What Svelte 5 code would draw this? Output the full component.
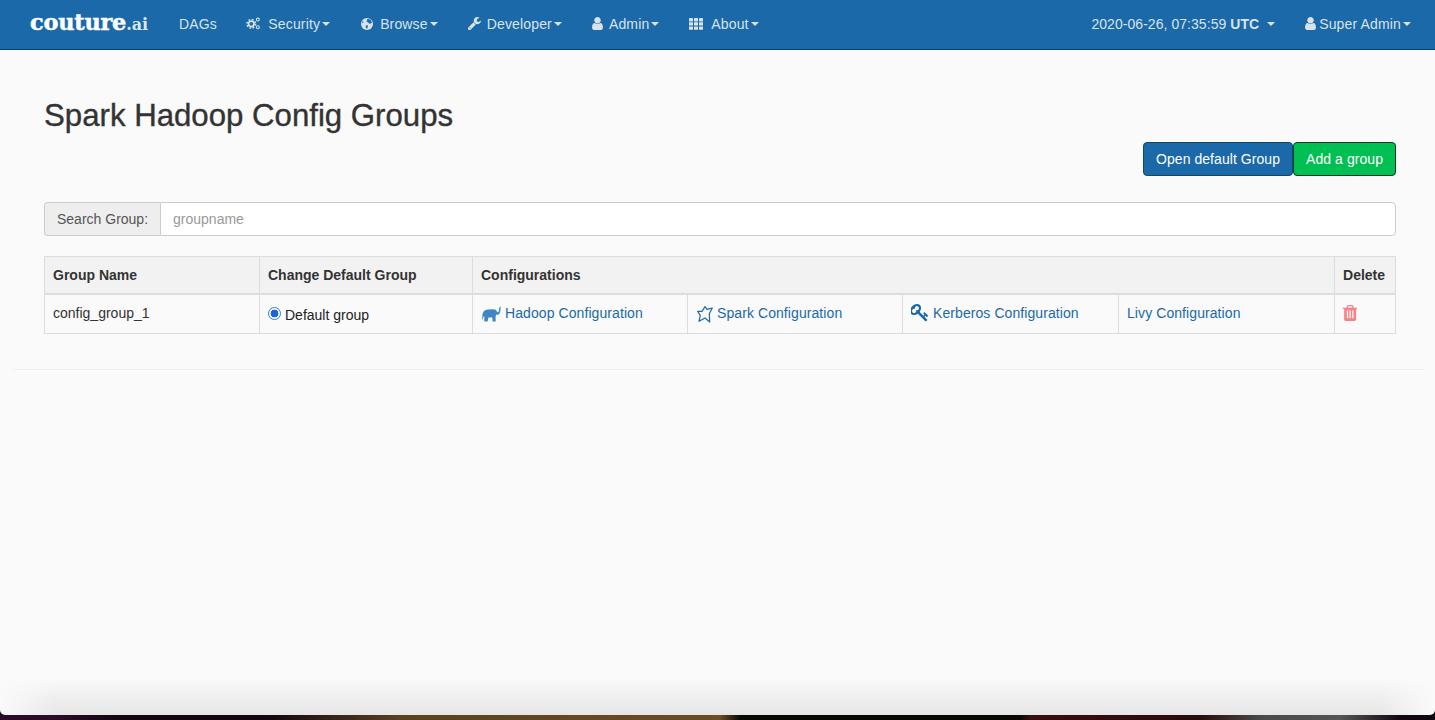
<script lang="ts">
  const userPath =
    'M1536 1399q0 109-62.5 187t-150.5 78h-854q-88 0-150.5-78t-62.5-187q0-85 8.5-160.5t31.5-152 58.5-131 94-89 134.5-34.5q131 128 313 128t313-128q76 0 134.5 34.5t94 89 58.5 131 31.5 152 8.5 160.5zm-256-887q0 159-112.5 271.5t-271.5 112.5-271.5-112.5-112.5-271.5 112.5-271.5 271.5-112.5 271.5 112.5 112.5 271.5z';
  const wrenchPath =
    'M448 1472q0-26-19-45t-45-19-45 19-19 45 19 45 45 19 45-19 19-45zm644-420l-682 682q-37 37-90 37-52 0-91-37l-106-108q-38-36-38-90 0-53 38-91l681-681q39 98 114.5 173.5t173.5 114.5zm634-435q0 39-23 106-47 134-164.5 217.5t-258.5 83.5q-185 0-316.5-131.5t-131.5-316.5 131.5-316.5 316.5-131.5q58 0 121.5 16.5t107.5 46.5q16 11 16 28t-16 28l-293 169v224l193 107q5-3 79-48.5t135.5-81 70.5-35.5q15 0 23.5 10t8.5 25z';
  const keyPath =
    'M832 512q0-80-56-136t-136-56-136 56-56 136q0 42 19 83-41-19-83-19-80 0-136 56t-56 136 56 136 136 56 136-56 56-136q0-42-19-83 41 19 83 19 80 0 136-56t56-136zm851 704q0 17-49 66t-66 49q-9 0-28.5-16t-36.5-33-38.5-40-24.5-26l-96 96 220 220q28 28 28 68 0 42-39 81t-81 39q-40 0-68-28l-671-671q-176 131-365 131-163 0-265.5-102.5t-102.5-265.5q0-160 95-313t248-248 313-95q163 0 265.5 102.5t102.5 265.5q0 189-131 365l355 355 96-96q-2-2-26-24.5t-40-38.5-33-36.5-16-28.5q0-17 49-66t66-49q13 0 23 10 6 6 46 44.5t82 79.5 86.5 86 73 78 28.5 41z';
  const trashPath =
    'M704 1376v-704q0-14-9-23t-23-9h-64q-14 0-23 9t-9 23v704q0 14 9 23t23 9h64q14 0 23-9t9-23zm256 0v-704q0-14-9-23t-23-9h-64q-14 0-23 9t-9 23v704q0 14 9 23t23 9h64q14 0 23-9t9-23zm256 0v-704q0-14-9-23t-23-9h-64q-14 0-23 9t-9 23v704q0 14 9 23t23 9h64q14 0 23-9t9-23zm-544-992h448l-48-117q-7-9-17-11h-317q-10 2-17 11zm928 32v64q0 14-9 23t-23 9h-96v948q0 83-47 143.5t-113 60.5h-832q-66 0-113-58.5t-47-141.5v-952h-96q-14 0-23-9t-9-23v-64q0-14 9-23t23-9h309l70-167q15-37 54-63t79-26h320q40 0 79 26t54 63l70 167h309q14 0 23 9t9 23z';
</script>

<div class="page">
  <nav class="navbar">
    <a class="brand" href="#home">couture<span class="brand-ai">.ai</span></a>
    <ul class="menu">
      <li><a class="plain" href="#dags">DAGs</a></li>
      <li>
        <a href="#security">
          <svg class="ico cogs" viewBox="0 0 16 14" aria-hidden="true">
            <circle cx="5.6" cy="7.4" r="3" fill="none" stroke="currentColor" stroke-width="1.9" />
            <circle cx="5.6" cy="7.4" r="4.7" fill="none" stroke="currentColor" stroke-width="1.5" stroke-dasharray="1.9 1.8" />
            <circle cx="12.7" cy="2.8" r="1.6" fill="none" stroke="currentColor" stroke-width="1.1" />
            <circle cx="12.7" cy="11" r="1.6" fill="none" stroke="currentColor" stroke-width="1.1" />
          </svg>
          <span>Security</span><i class="caret"></i>
        </a>
      </li>
      <li>
        <a href="#browse">
          <svg class="ico globe" viewBox="0 0 12 12" aria-hidden="true">
            <circle cx="6" cy="6" r="6" fill="currentColor" />
            <path d="M6.5 0.8 9.5 1.8 11 4.5 8.8 6 7.2 4.6 5.5 3.6ZM4.8 7.2 7 7.6 6.2 11 4.8 9.6ZM0.6 3.8 2.4 3.2 2 5.2Z" fill="#1b69a8" />
          </svg>
          <span>Browse</span><i class="caret"></i>
        </a>
      </li>
      <li>
        <a href="#developer">
          <svg class="ico wrench" viewBox="128 128 1600 1600" aria-hidden="true"><path d={wrenchPath} fill="currentColor" /></svg>
          <span>Developer</span><i class="caret"></i>
        </a>
      </li>
      <li>
        <a href="#admin">
          <svg class="ico user" viewBox="256 128 1280 1536" aria-hidden="true"><path d={userPath} fill="currentColor" /></svg>
          <span>Admin</span><i class="caret"></i>
        </a>
      </li>
      <li>
        <a href="#about">
          <svg class="ico grid" viewBox="0 0 14 12" aria-hidden="true">
            {#each [0, 4.2, 8.4] as y}
              {#each [0, 5, 10] as x}
                <rect {x} {y} width="4" height="3.4" rx="0.4" fill="currentColor" />
              {/each}
            {/each}
          </svg>
          <span>About</span><i class="caret"></i>
        </a>
      </li>
    </ul>
    <ul class="menu menu-right">
      <li>
        <a href="#clock"><span class="clock">2020-06-26, 07:35:59 <b>UTC</b></span><i class="caret caret-clock"></i></a>
      </li>
      <li>
        <a href="#profile">
          <svg class="ico user user-small" viewBox="256 128 1280 1536" aria-hidden="true"><path d={userPath} fill="currentColor" /></svg>
          <span>Super Admin</span><i class="caret"></i>
        </a>
      </li>
    </ul>
  </nav>

  <main class="content">
    <div class="container">
      <h1>Spark Hadoop Config Groups</h1>
      <div class="actions">
        <button type="button" class="btn btn-blue">Open default Group</button>
        <button type="button" class="btn btn-green">Add a group</button>
      </div>

      <div class="search">
        <span class="search-label">Search Group:</span>
        <input class="search-input" type="text" placeholder="groupname" />
      </div>

      <table class="groups">
        <colgroup>
          <col style="width: 215px" />
          <col style="width: 213px" />
          <col style="width: 215px" />
          <col style="width: 215px" />
          <col style="width: 216px" />
          <col style="width: 216px" />
          <col style="width: 61px" />
        </colgroup>
        <thead>
          <tr>
            <th>Group Name</th>
            <th>Change Default Group</th>
            <th colspan="4">Configurations</th>
            <th>Delete</th>
          </tr>
        </thead>
        <tbody>
          <tr>
            <td>config_group_1</td>
            <td>
              <span class="radio-row"><span class="radio"></span>Default group</span>
            </td>
            <td>
              <a href="#hadoop">
                <svg class="cfg-ico elephant" viewBox="0 0 20 16" aria-hidden="true">
                  <path d="M0.4 9.5C0.6 6 2.6 3.6 6 3.5L11 3.3C13 3.2 14.4 4 14.8 5.6C15.6 6.8 16.8 6.2 17 4.6L17.3 1.6 18.9 0.3 18.4 2 18.7 2.4 18.2 5.4C17.8 8 15.8 9.4 14.3 8.6L13.6 10.2 13.7 15.6 10.6 15.6 10.3 11.6 6.4 11.6 5.6 15.6 2.2 15.6 2.4 10.4 1.4 10.6 0.9 13.4 0.2 13.2Z" fill="#3f86c4" />
                </svg><span>Hadoop Configuration</span>
              </a>
            </td>
            <td>
              <a href="#spark">
                <svg class="cfg-ico spark" viewBox="0 0 16 17" aria-hidden="true">
                  <path d="M0.7 5.3 5 5.3 8 0.7 10 3.3 15.3 2 12.3 7.7 12.7 16 8 12 2 15.3 3.3 9.3Z" fill="none" stroke="#1b69a8" stroke-width="1.2" stroke-linejoin="round" />
                </svg><span>Spark Configuration</span>
              </a>
            </td>
            <td>
              <a href="#kerberos">
                <svg class="cfg-ico key" viewBox="128 128 1600 1664" aria-hidden="true"><path d={keyPath} fill="#1b69a8" /></svg><span>Kerberos Configuration</span>
              </a>
            </td>
            <td><a href="#livy"><span>Livy Configuration</span></a></td>
            <td>
              <a href="#delete" aria-label="Delete">
                <svg class="trash" viewBox="128 128 1408 1536" aria-hidden="true"><path d={trashPath} fill="#fb7f83" /></svg>
              </a>
            </td>
          </tr>
        </tbody>
      </table>
    </div>
    <hr class="rule" />
  </main>
  <div class="desktop"></div>
</div>

<style>
  :global(body) {
    margin: 0;
    background: #fafafa;
  }

  .page {
    display: flex;
    flex-direction: column;
    height: 720px;
    overflow: hidden;
    background: #0a0508;
    font-family: 'Liberation Sans', Arial, sans-serif;
    font-size: 14px;
    line-height: 20px;
    color: #333;
  }

  a {
    text-decoration: none;
  }

  .navbar {
    display: flex;
    flex: none;
    align-items: center;
    box-sizing: content-box;
    height: 47px;
    padding: 0 9px 2px 30px;
    background: #1b69a8;
    border-bottom: 1px solid #0b3f78;
  }

  .brand {
    width: 134px;
    font-family: 'DejaVu Serif', 'Liberation Serif', serif;
    font-size: 22.4px;
    font-weight: 700;
    line-height: 24px;
    letter-spacing: -0.2px;
    color: #fff;
    -webkit-text-stroke: 0.5px #fff;
  }

  .brand-ai {
    font-size: 16px;
    letter-spacing: 0;
    color: #dce8f2;
    -webkit-text-stroke: 0;
  }

  .menu {
    display: flex;
    align-items: center;
    margin: 0;
    padding: 0;
    list-style: none;
  }

  .menu-right {
    margin-left: auto;
  }

  .menu a {
    display: flex;
    align-items: center;
    padding: 0 15px;
    letter-spacing: 0.15px;
    color: #d8e3ec;
    white-space: pre;
  }

  .menu a.plain {
    padding-right: 14.4px;
  }

  .menu a .clock {
    letter-spacing: 0.05px;
  }

  .ico {
    flex: none;
    display: block;
  }

  .cogs {
    width: 15px;
    height: 13px;
    margin-right: 7px;
  }

  .globe {
    width: 12px;
    height: 12px;
    margin: 0 7px 0 1px;
  }

  .wrench {
    width: 13px;
    height: 13px;
    margin-right: 6px;
  }

  .user {
    width: 11px;
    height: 13px;
    margin-right: 6px;
  }

  .user-small {
    margin-right: 3px;
  }

  .grid {
    width: 14px;
    height: 12px;
    margin-right: 8px;
  }

  .caret {
    display: inline-block;
    width: 0;
    height: 0;
    margin-left: 2px;
    border-top: 4px solid currentColor;
    border-left: 4px solid transparent;
    border-right: 4px solid transparent;
  }

  .caret-clock {
    margin-left: 8px;
  }

  .content {
    position: relative;
    flex: 1;
    border-radius: 0 0 5px 5px;
    background:
      linear-gradient(to right, #fafafa, rgba(250, 250, 250, 0) 55px, rgba(250, 250, 250, 0) calc(100% - 55px), #fafafa),
      linear-gradient(to bottom, #fafafa calc(100% - 38px), #e6e6e6);
  }

  .container {
    padding: 0 39px 0 44px;
  }

  h1 {
    margin: 0;
    padding-top: 49px;
    font-size: 31.2px;
    font-weight: 500;
    line-height: 33px;
    color: #333;
    -webkit-text-stroke: 0.35px #333;
  }

  .actions {
    display: flex;
    justify-content: flex-end;
    margin-top: 10px;
  }

  .btn {
    height: 34px;
    padding: 6px 12px;
    border: 1px solid;
    border-radius: 4px;
    font: inherit;
    letter-spacing: 0.06px;
    color: #fff;
  }

  .btn-blue {
    background: #1b69a8;
    border-color: #0c4a66;
  }

  .btn-green {
    background: #00bf53;
    border-color: #0a3a22;
  }

  .search {
    display: flex;
    height: 34px;
    margin-top: 26px;
  }

  .search-label {
    padding: 6px 12px;
    background: #eee;
    border: 1px solid #ccc;
    border-right: 0;
    border-radius: 4px 0 0 4px;
    color: #555;
  }

  .search-input {
    flex: 1;
    min-width: 0;
    box-sizing: border-box;
    padding: 6px 12px;
    background: #fff;
    border: 1px solid #ccc;
    border-radius: 0 4px 4px 0;
    font: inherit;
    color: #555;
    outline: none;
  }

  .search-input::placeholder {
    color: #999;
    opacity: 1;
  }

  .groups {
    width: 1351px;
    margin-top: 20px;
    border-collapse: collapse;
    table-layout: fixed;
  }

  th,
  td {
    padding: 8px;
    border: 1px solid #ddd;
    text-align: left;
    vertical-align: top;
  }

  th {
    height: 20px;
    background: #f2f2f2;
    border-bottom-width: 2px;
    font-weight: 700;
  }

  td a {
    display: flex;
    align-items: center;
    letter-spacing: 0.08px;
    color: #1b69a8;
  }

  .radio-row {
    display: flex;
    align-items: center;
    padding-top: 2px;
    color: #222;
  }

  .radio {
    flex: none;
    box-sizing: border-box;
    width: 13px;
    height: 13px;
    margin: -3px 4px 0 0;
    border: 1px solid #2b78ee;
    border-radius: 50%;
    background: radial-gradient(circle, #1a66e0 0 3.6px, #fff 4.2px);
  }

  .cfg-ico {
    flex: none;
    display: block;
  }

  .elephant {
    width: 20px;
    height: 16px;
    margin: 1px 3px 0 1px;
  }

  .spark {
    width: 16px;
    height: 17px;
    margin: 2px 4px 0 1px;
  }

  .key {
    width: 18px;
    height: 18px;
    margin-right: 4px;
  }

  .trash {
    display: block;
    width: 15px;
    height: 16px;
    margin: 2px 0 0 -1px;
  }

  .rule {
    height: 1px;
    margin: 35px 10px 0 14px;
    border: 0;
    background: #f0f0f0;
  }

  .desktop {
    flex: none;
    height: 5px;
    background: linear-gradient(to right, #2e0a2a 0 55px, #14060f 120px, #14060f 270px, #5a4021 400px, #6b4d27 720px, #0a0805 740px, #0a0805 1020px, #3a0d10 1030px, #2a0a0c 1200px, #4a4a4a 1260px, #555 1340px, #120812 1400px);
  }
</style>
